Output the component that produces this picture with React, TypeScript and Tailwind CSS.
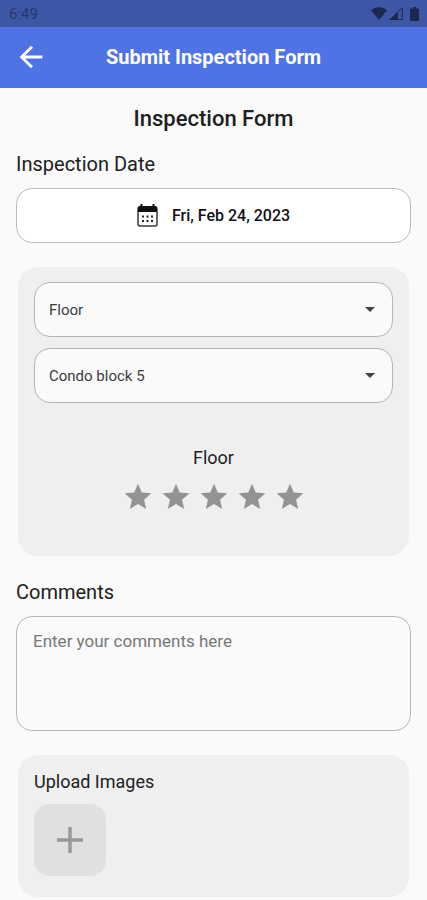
import { useState } from "react";

const FLOORS = ["Floor", "Wall", "Ceiling"];
const BLOCKS = ["Condo block 5", "Condo block 6", "Condo block 7"];
const STARS = [1, 2, 3, 4, 5];

function StatusBar() {
  return (
    <div className="flex h-[27px] items-center justify-between bg-[#3d56a6] pr-2 pl-[9px] text-[#1b284e]">
      <span className="text-[15px] leading-5 text-[#27386d]">6:49</span>
      <div className="flex items-center">
        <svg className="h-[13px] w-4" viewBox="0 0 16 13" fill="currentColor" aria-hidden="true">
          <path d="M0 3.2C4.5-.8 11.500-.8 16 3.200L8 13Z" />
        </svg>
        <svg className="ml-[2px] h-[13px] w-[14px]" viewBox="0 0 14 13" fill="currentColor" aria-hidden="true">
          <path d="M0 13 9 4.500V13Z" />
          <path d="M9 4.500 13.300.800V12.500H9" fill="none" stroke="currentColor" strokeWidth="1" />
        </svg>
        <svg className="ml-[7px] h-[14px] w-[9px]" viewBox="0 0 9 14" fill="currentColor" aria-hidden="true">
          <path d="M3 0h3v1.500h2A1 1 0 0 1 9 2.500V13a1 1 0 0 1-1 1H1a1 1 0 0 1-1-1V2.500a1 1 0 0 1 1-1h2Z" />
        </svg>
      </div>
    </div>
  );
}

function AppBar() {
  return (
    <header className="grid h-[61px] grid-cols-[62px_1fr_62px] items-center bg-[#4f73e5] pb-[2px] text-white">
      <button type="button" aria-label="Back" className="flex h-full items-center justify-center">
        <svg className="size-[34px]" viewBox="0 0 24 24" fill="currentColor" aria-hidden="true">
          <path d="M20 11H7.830l5.590-5.590L12 4l-8 8 8 8 1.410-1.410L7.830 13H20v-2z" />
        </svg>
      </button>
      <h1 className="text-center text-xl leading-6 font-bold">Submit Inspection Form</h1>
    </header>
  );
}

function Dropdown({ label, options }: { label: string; options: string[] }) {
  return (
    <div className="grid items-center">
      <select
        aria-label={label}
        className="col-start-1 row-start-1 w-full appearance-none rounded-2xl border border-[#b4b4b4] bg-[#fafafa] px-[14px] pt-[15px] pb-[14px] text-[15px] leading-6 text-[#3c3c3c]"
      >
        {options.map((option) => (
          <option key={option}>{option}</option>
        ))}
      </select>
      <svg
        className="pointer-events-none col-start-1 row-start-1 mr-[18px] h-[5px] w-[10px] justify-self-end"
        viewBox="0 0 10 5"
        fill="#404542"
        aria-hidden="true"
      >
        <path d="M0 0h10L5 5Z" />
      </svg>
    </div>
  );
}

function Rating() {
  const [rating, setRating] = useState(0);
  return (
    <div className="mt-[11px] flex justify-center gap-[6px]">
      {STARS.map((value) => (
        <button
          key={value}
          type="button"
          aria-label={`Rate ${value} of 5`}
          onClick={() => setRating(value)}
          className={value <= rating ? "text-amber-500" : "text-[#939393]"}
        >
          <svg className="size-8" viewBox="0 0 24 24" fill="currentColor" aria-hidden="true">
            <path d="M12 17.270 18.180 21l-1.640-7.030L22 9.240l-7.190-.610L12 2 9.190 8.630 2 9.240l5.460 4.730L5.820 21z" />
          </svg>
        </button>
      ))}
    </div>
  );
}

export default function App() {
  return (
    <div className="min-h-screen bg-[#fafafa] font-['Roboto',sans-serif] text-[#202020]">
      <StatusBar />
      <AppBar />
      <main className="px-4 pt-[19px] pb-[3px]">
        <h2 className="text-center text-[22px] leading-6 font-medium">Inspection Form</h2>

        <p id="date-label" className="mt-[21px] text-xl leading-6">
          Inspection Date
        </p>
        <button
          type="button"
          aria-describedby="date-label"
          className="mt-3 flex h-[55px] w-full items-center justify-center gap-[14px] rounded-2xl border border-[#bcbcbc] bg-white text-base font-medium text-[#111111]"
        >
          <svg className="h-[23px] w-[21px]" viewBox="0 0 21 23" fill="none" aria-hidden="true">
            <rect x="1" y="3" width="19" height="19" rx="2" stroke="#3a3a3a" strokeWidth="1.500" />
            <path d="M1 4a2 2 0 0 1 2-2h15a2 2 0 0 1 2 2v4H1Z" fill="#111" />
            <path d="M4.500 0v3M16.500 0v3" stroke="#111" strokeWidth="2" />
            <path d="M5 12.500h2m2.500 0h2m2.500 0h2M5 17h2m2.500 0h2m2.500 0h2" stroke="#222" strokeWidth="2" />
          </svg>
          Fri, Feb 24, 2023
        </button>

        <section className="mx-[2px] mt-6 rounded-[20px] bg-[#efefef] px-4 pt-[15px] pb-[43px]">
          <div className="flex flex-col gap-[11px]">
            <Dropdown label="Area" options={FLOORS} />
            <Dropdown label="Block" options={BLOCKS} />
          </div>
          <h3 className="mt-[43px] text-center text-lg leading-6">Floor</h3>
          <Rating />
        </section>

        <label htmlFor="comments" className="mt-6 block text-xl leading-6">
          Comments
        </label>
        <textarea
          id="comments"
          placeholder="Enter your comments here"
          className="mt-3 block h-[115px] w-full resize-none rounded-2xl border border-[#b8b8b8] bg-[#fafafa] px-4 py-3 text-[17px] leading-6 placeholder:text-[#777777]"
        />

        <section className="mx-[2px] mt-6 rounded-[20px] bg-[#efefef] px-4 pt-[15px] pb-[21px]">
          <h3 className="text-lg leading-6">Upload Images</h3>
          <button
            type="button"
            aria-label="Add image"
            className="mt-[10px] flex size-[72px] items-center justify-center rounded-2xl bg-[#e0e0e0]"
          >
            <svg className="size-[26px]" viewBox="0 0 26 26" stroke="#999999" strokeWidth="3.500" aria-hidden="true">
              <path d="M13 0v26M0 13h26" />
            </svg>
          </button>
        </section>
      </main>
    </div>
  );
}
